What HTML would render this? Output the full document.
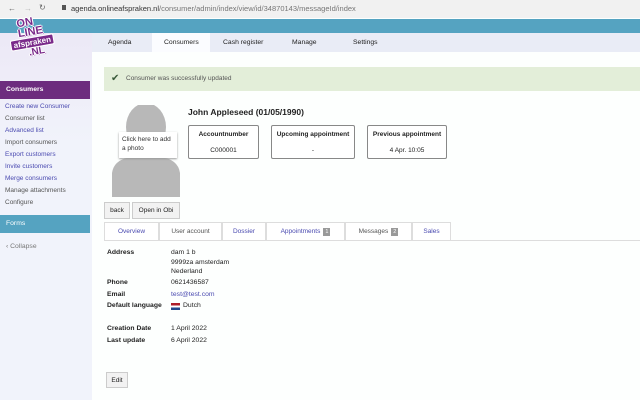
<!DOCTYPE html>
<html><head><meta charset="utf-8"><style>
*{margin:0;padding:0;box-sizing:border-box}
body{width:640px;height:400px;overflow:hidden;font-family:"Liberation Sans",sans-serif;font-size:7px;color:#222;background:#fdfffe;position:relative}
.a{position:absolute}
.sb a{display:block;color:#4a4ab0;height:12px;line-height:12px;padding-left:5px;font-size:6.5px}
.box{position:absolute;top:125px;height:34px;border:1px solid #888;border-radius:2px;background:#fff;text-align:center;font-size:6.5px}
.box b{display:block;margin-top:5px}
.box span{display:block;margin-top:9px}
.tab{position:absolute;top:222px;height:18px;border:1px solid #ddd;border-bottom:none;text-align:center;line-height:17px;color:#4a4ab0;font-size:6.5px;background:#fff}
.badge{display:inline-block;background:#999;color:#fff;font-size:5.5px;padding:0 2px;line-height:8px;margin-left:3px}
.l{position:absolute;left:107px;font-weight:bold;font-size:6.8px}
.v{position:absolute;left:171px;font-size:6.8px}
.btn{position:absolute;background:#f2f2f2;border:1px solid #ccc;font-size:6.5px;text-align:center}
.lg{font-weight:bold;color:#7a2a8a;text-shadow:1px 0 #fff,-1px 0 #fff,0 1px #fff,0 -1px #fff,1px 1px #c9a0d0}
</style></head><body>
<div class="a" style="left:0;top:0;width:640px;height:18px;background:#f1f1f1"></div>
<div class="a" style="left:8px;top:4px;color:#666;font-size:8px">←</div>
<div class="a" style="left:24px;top:4px;color:#bbb;font-size:8px">→</div>
<div class="a" style="left:39px;top:3px;color:#666;font-size:8px">↻</div>
<div class="a" style="left:62px;top:5px;width:4px;height:5px;background:#555"></div>
<div class="a" style="left:71px;top:4px;color:#333;font-size:7.5px">agenda.onlineafspraken.nl<span style="color:#777">/consumer/admin/index/view/id/34870143/messageId/index</span></div>
<div class="a" style="left:0;top:19px;width:640px;height:14px;background:#55a3c1"></div>
<div class="a" style="left:0;top:33px;width:640px;height:19px;background:#e9ecf6"></div>
<div class="a" style="left:0;top:33px;width:92px;height:367px;background:linear-gradient(#ece8f6,#f1f3fb 30%)"></div>
<div class="a" style="left:152px;top:33px;width:58px;height:19px;background:#fbfcff"></div>
<div class="a" style="left:108px;top:39px;font-size:6.8px">Agenda</div>
<div class="a" style="left:164px;top:39px;font-size:6.8px">Consumers</div>
<div class="a" style="left:223px;top:39px;font-size:6.8px">Cash register</div>
<div class="a" style="left:292px;top:39px;font-size:6.8px">Manage</div>
<div class="a" style="left:353px;top:39px;font-size:6.8px">Settings</div>
<div class="a" style="left:4px;top:17px;width:56px;height:48px;transform:rotate(-10deg);text-align:center">
<div class="lg" style="font-size:11px;line-height:10px;margin-left:-8px">ON</div>
<div class="lg" style="font-size:11px;line-height:10px;margin-left:0">LINE</div>
<div style="display:inline-block;background:#7a2a8a;color:#fff;font-weight:bold;font-size:8px;line-height:9px;padding:0 2px;border-radius:2px;border:1px solid #fff">afspraken</div>
<div class="lg" style="font-size:10px;line-height:9px;margin-left:6px">.NL</div></div>
<div class="a" style="left:104px;top:67px;width:536px;height:24px;background:#e3eed9"></div>
<div class="a" style="left:111px;top:73px;color:#3a5a3a;font-size:10px">✔</div>
<div class="a" style="left:126px;top:75px;color:#555;font-size:6.5px">Consumer was successfully updated</div>
<div class="a" style="left:0;top:81px;width:90px;height:18px;background:#6d2c7e;color:#fff;font-weight:bold;font-size:6.8px;line-height:18px;padding-left:6px">Consumers</div>
<div class="a sb" style="left:0;top:101px;width:90px">
<a>Create new Consumer</a><a style="color:#555">Consumer list</a><a>Advanced list</a><a style="color:#555">Import consumers</a><a>Export customers</a><a>Invite customers</a><a>Merge consumers</a><a style="color:#555">Manage attachments</a><a style="color:#555">Configure</a></div>
<div class="a" style="left:0;top:215px;width:90px;height:18px;background:#55a3c1;color:#fff;font-size:6.8px;line-height:18px;padding-left:6px">Forms</div>
<div class="a" style="left:6px;top:243px;color:#777;font-size:6.8px">‹ Collapse</div>
<svg class="a" style="left:112px;top:105px" width="70" height="92"><ellipse cx="34" cy="22" rx="20" ry="24" fill="#b8b8b8"/><rect x="20" y="36" width="28" height="20" fill="#b8b8b8"/><path d="M0 92 L0 68 Q2 54 20 52 L48 52 Q66 54 68 68 L68 92Z" fill="#b8b8b8"/></svg>
<div class="a" style="left:119px;top:132px;width:58px;height:26px;background:#fff;box-shadow:0 1px 2px #999;font-size:6.5px;padding:3px 3px;line-height:9px;color:#333">Click here to add a photo</div>
<div class="a" style="left:188px;top:107px;font-weight:bold;font-size:8.5px">John Appleseed (01/05/1990)</div>
<div class="box" style="left:188px;width:71px"><b>Accountnumber</b><span>C000001</span></div>
<div class="box" style="left:271px;width:84px"><b>Upcoming appointment</b><span>-</span></div>
<div class="box" style="left:367px;width:80px"><b>Previous appointment</b><span>4 Apr. 10:05</span></div>
<div class="btn" style="left:104px;top:202px;width:26px;height:17px;line-height:16px">back</div>
<div class="btn" style="left:132px;top:202px;width:48px;height:17px;line-height:16px">Open in Obi</div>
<div class="a" style="left:104px;top:240px;width:536px;height:1px;background:#ddd"></div>
<div class="tab" style="left:104px;width:55px">Overview</div>
<div class="tab" style="left:159px;width:63px;color:#555">User account</div>
<div class="tab" style="left:222px;width:44px">Dossier</div>
<div class="tab" style="left:266px;width:79px">Appointments<span class="badge">1</span></div>
<div class="tab" style="left:345px;width:67px;color:#555">Messages<span class="badge">2</span></div>
<div class="tab" style="left:412px;width:39px">Sales</div>
<div class="l" style="top:249px">Address</div><div class="v" style="top:249px">dam 1 b</div>
<div class="v" style="top:259px">9999za amsterdam</div>
<div class="v" style="top:268px">Nederland</div>
<div class="l" style="top:279px">Phone</div><div class="v" style="top:279px">0621436587</div>
<div class="l" style="top:291px">Email</div><div class="v" style="top:291px;color:#4a4ab0">test@test.com</div>
<div class="l" style="top:302px">Default language</div>
<div class="a" style="left:171px;top:303px;width:9px;height:7px;background:linear-gradient(#ae1c28 33%,#fff 33%,#fff 66%,#21468b 66%)"></div>
<div class="v" style="left:183px;top:302px">Dutch</div>
<div class="l" style="top:325px">Creation Date</div><div class="v" style="top:325px">1 April 2022</div>
<div class="l" style="top:337px">Last update</div><div class="v" style="top:337px">6 April 2022</div>
<div class="btn" style="left:106px;top:372px;width:22px;height:16px;line-height:15px">Edit</div>
</body></html>
